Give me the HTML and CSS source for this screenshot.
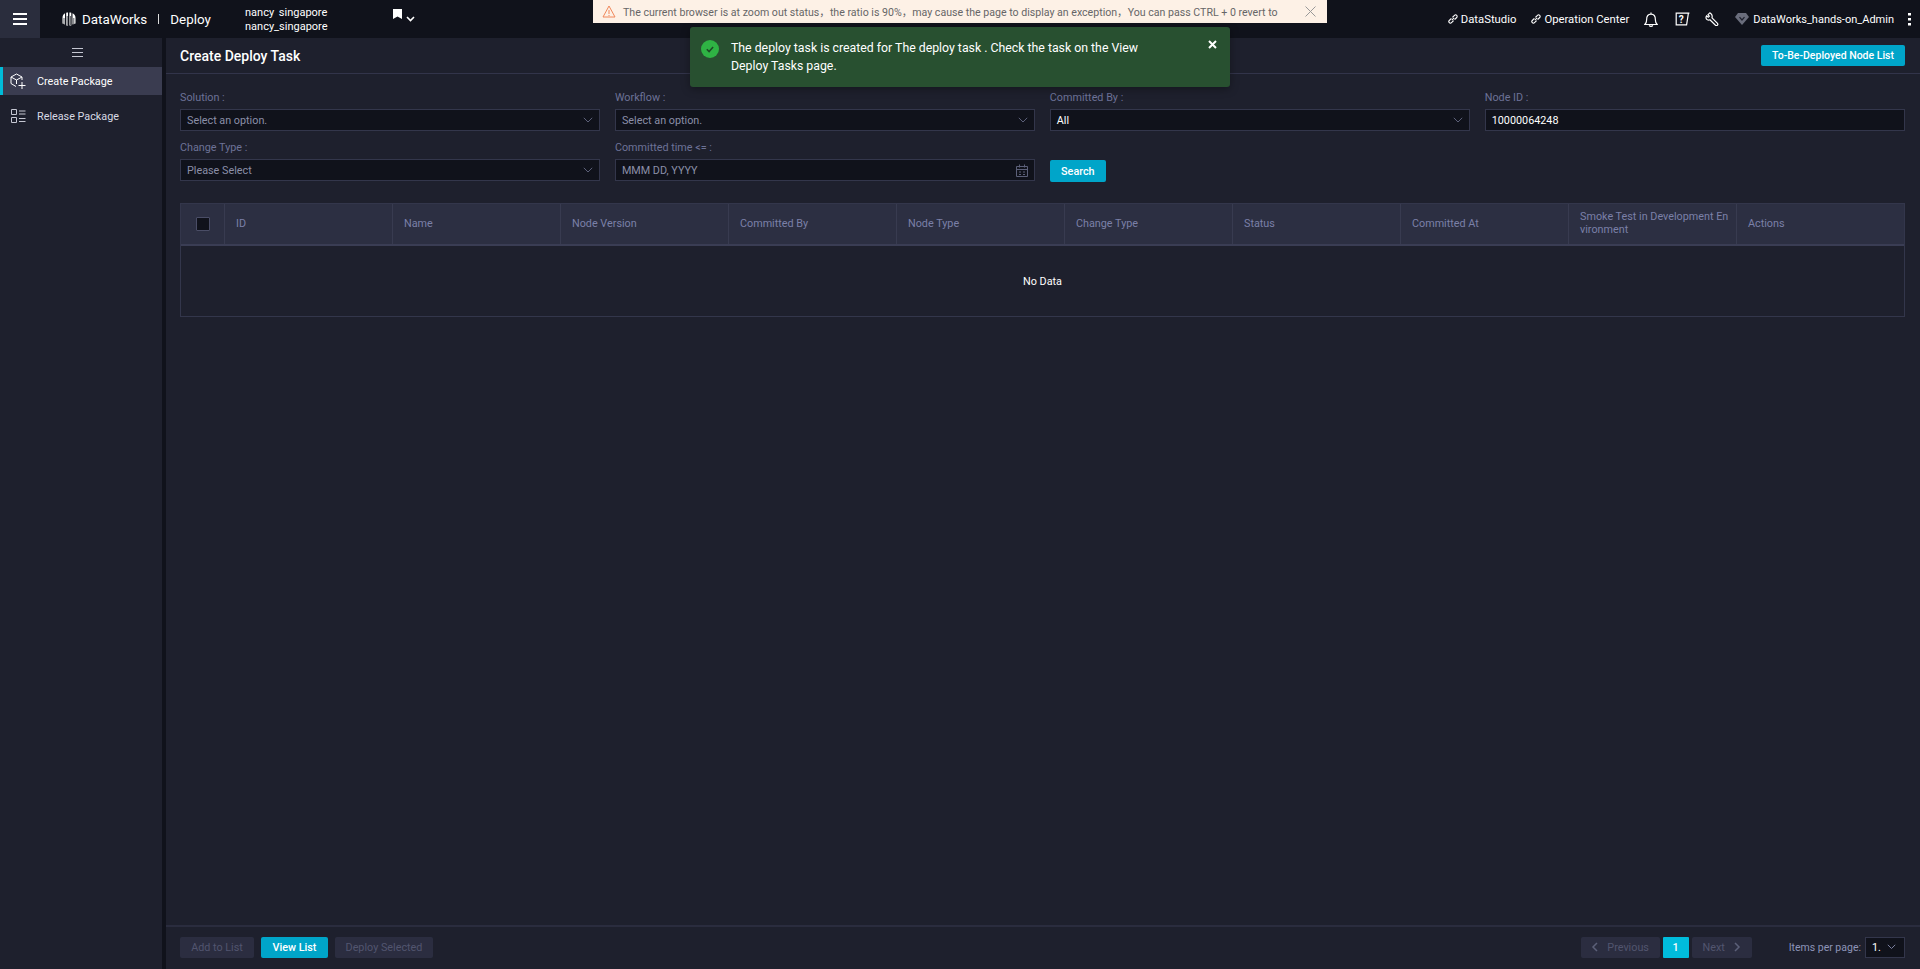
FILE: index.html
```html
<!DOCTYPE html>
<html>
<head>
<meta charset="UTF-8">
<title>Create Deploy Task</title>
<link rel="stylesheet" href="styles.css">
</head>
<body>

<div class="topbar">
  <div class="menu-btn">
    <svg width="14" height="12" viewBox="0 0 14 12"><path d="M0 1h14M0 6h14M0 11h14" stroke="#fff" stroke-width="2" fill="none"/></svg>
  </div>
  <div class="brand">
    <svg class="logo" width="14" height="14" viewBox="0 0 14 14"><path d="M.5 11.500V6C.5 3.500 1.500 2 3 1.200V12.500zM4.200 13.500V.8C4.800.6 5.400.5 6 .5V13.500zM7.400 13.500V.5C8 .5 8.700.6 9.300.8V13.500zM10.500 12.500V1.200C12.300 2 13.500 3.500 13.500 6V11.500z" fill="#fff"/><path d="M2 12V6M5.200 13V4M8.400 13V4M11.800 12V6" stroke="#10121b" stroke-width=".7"/></svg>
    <span class="brand-name">DataWorks</span>
    <span class="brand-sep"></span>
    <span class="brand-name">Deploy</span>
  </div>
  <div class="workspace">
    <div class="ws-first">nancy singapore</div>
    <div>nancy_singapore</div>
  </div>
  <div class="bookmark">
    <svg width="9" height="10" viewBox="0 0 9 10"><path d="M0 0h9v10L4.500 7.500 0 10z" fill="#fff"/></svg>
    <svg class="bookmark-arrow" width="9" height="6" viewBox="0 0 9 6"><path d="M1 1l3.500 3.500L8 1" stroke="#fff" stroke-width="1.600" fill="none"/></svg>
  </div>
  <div class="top-right">
    <a class="top-link">
      <svg width="10" height="10" viewBox="0 0 10 10"><path d="M3.800 6.200L6.200 3.800M3.400 4.400L1.300 6.500a1.500 1.500 0 0 0 2.200 2.200l2.100-2.100M4.400 3.400l2.100-2.100a1.500 1.500 0 0 1 2.200 2.200L6.600 5.600" stroke="#fff" stroke-width="1.100" fill="none"/></svg>
      DataStudio
    </a>
    <a class="top-link">
      <svg width="10" height="10" viewBox="0 0 10 10"><path d="M3.800 6.200L6.200 3.800M3.400 4.400L1.300 6.500a1.500 1.500 0 0 0 2.200 2.200l2.100-2.100M4.400 3.400l2.100-2.100a1.500 1.500 0 0 1 2.200 2.200L6.600 5.600" stroke="#fff" stroke-width="1.100" fill="none"/></svg>
      Operation Center
    </a>
    <svg class="ic-bell" width="14" height="15" viewBox="0 0 14 15"><path d="M.8 12.500c1.200-1 1.800-2 1.800-4.600C2.600 4 4.400 2.200 7 2.200s4.400 1.800 4.400 5.700c0 2.600.6 3.600 1.800 4.600zM7 2.200V.6M5.200 13.400c.4.700 1 1 1.800 1s1.400-.3 1.800-1" stroke="#fff" stroke-width="1.200" fill="none"/></svg>
    <svg class="ic-help" width="15" height="14" viewBox="0 0 15 14"><path d="M.6 1.200h13.800M1.200 1.200v11.600h10.400l1.800-11.600" stroke="#fff" stroke-width="1.200" fill="none"/><text x="3.800" y="10.800" class="ic-help-q">?</text></svg>
    <svg class="ic-wrench" width="14" height="14" viewBox="0 0 14 14"><path d="M4.800.9L3 2.700l1.300 1.500-1.100 1.100L1.600 3.900C.6 5.300.9 7 2.400 7.800c.8.400 1.800.3 2.500 0l5.600 5.400c.6.500 1.300.4 1.900 0 .6-.6.500-1.300.1-1.800L7 5.800c.4-1.300.2-2.500-.6-3.600C6 1.600 5.500 1.200 4.800.9z" stroke="#fff" stroke-width="1.200" fill="none"/></svg>
    <div class="user">
      <svg width="14" height="12" viewBox="0 0 14 12"><path d="M3 0h8l3 4-7 8-7-8z" fill="#6a6d7c"/><path d="M4.500 4.200L7 7l2.500-2.800" stroke="#1e202d" stroke-width="1.200" fill="none"/></svg>
      DataWorks_hands-on_Admin
    </div>
    <svg class="ic-dots" width="3" height="13" viewBox="0 0 3 13"><path d="M0 0h3v2.500H0zM0 5h3v2.500H0zM0 10h3v2.500H0z" fill="#fff"/></svg>
  </div>
</div>

<div class="zoom-tip">
  <svg width="14" height="13" viewBox="0 0 14 13"><path d="M7 1L1 12h12zM7 5v4M7 10v1" stroke="#f0875a" fill="none"/></svg>
  <span class="zoom-text">The current browser is at zoom out status，the ratio is 90%，may cause the page to display an exception，You can pass CTRL + 0 revert to</span>
  <svg class="zoom-close" width="11" height="11" viewBox="0 0 11 11"><path d="M.5.500l10 10M10.500.500l-10 10" stroke="#999" fill="none"/></svg>
</div>

<div class="toast">
  <svg class="toast-icon" width="18" height="18" viewBox="0 0 18 18"><circle cx="9" cy="9" r="9" fill="#2fb344"/><path d="M5.800 9.200l2.300 2.400 4-4.600" stroke="#1d4a26" stroke-width="1.500" fill="none"/></svg>
  <div class="toast-text">The deploy task is created for The deploy task . Check the task on the View Deploy Tasks page.</div>
  <svg class="toast-close" width="9" height="9" viewBox="0 0 9 9"><path d="M1 1l7 7M8 1L1 8" stroke="#fff" stroke-width="2" fill="none"/></svg>
</div>

<div class="layout">
  <div class="sidebar">
    <div class="side-toggle">
      <svg width="11" height="9" viewBox="0 0 11 9"><path d="M0 .5h11M0 4.500h11M0 8.500h11" stroke="#c5c7d2" fill="none"/></svg>
    </div>
    <a class="side-item active">
      <svg width="16" height="16" viewBox="0 0 16 16"><path d="M1 4l5.500-3L12 4v3M1 4v6.500L6 13.500M1 4l5.500 3L12 4M6.500 7v4" stroke="#fff" fill="none"/><path d="M8.500 12.500h7M12 9v7" stroke="#fff" fill="none"/></svg>
      Create Package
    </a>
    <a class="side-item">
      <svg width="16" height="16" viewBox="0 0 16 16"><path d="M1.500 1.500h5v5h-5zM1.500 9.500h5v5h-5zM9 3h6.500M9 6h6.500M9 10.500h6.500M9 13.500h6.500" stroke="#c5c7d2" fill="none"/></svg>
      Release Package
    </a>
  </div>

  <div class="main">
    <div class="page-head">
      <h3 class="page-title">Create Deploy Task</h3>
      <a class="btn btn-primary btn-list">To-Be-Deployed Node List</a>
    </div>

    <div class="filters">
      <div class="field">
        <label>Solution :</label>
        <div class="input"><span class="ph">Select an option.</span><svg class="caret" width="10" height="6" viewBox="0 0 10 6"><path d="M.8.800L5 5 9.200.800" stroke="#5c6079" fill="none"/></svg></div>
      </div>
      <div class="field">
        <label>Workflow :</label>
        <div class="input"><span class="ph">Select an option.</span><svg class="caret" width="10" height="6" viewBox="0 0 10 6"><path d="M.8.800L5 5 9.200.800" stroke="#5c6079" fill="none"/></svg></div>
      </div>
      <div class="field">
        <label>Committed By :</label>
        <div class="input"><span class="val">All</span><svg class="caret" width="10" height="6" viewBox="0 0 10 6"><path d="M.8.800L5 5 9.200.800" stroke="#5c6079" fill="none"/></svg></div>
      </div>
      <div class="field">
        <label>Node ID :</label>
        <div class="input"><span class="val">10000064248</span></div>
      </div>
      <div class="field">
        <label>Change Type :</label>
        <div class="input"><span class="ph">Please Select</span><svg class="caret" width="10" height="6" viewBox="0 0 10 6"><path d="M.8.800L5 5 9.200.800" stroke="#5c6079" fill="none"/></svg></div>
      </div>
      <div class="field">
        <label>Committed time &lt;= :</label>
        <div class="input"><span class="ph">MMM DD, YYYY</span>
          <svg class="caret" width="12" height="13" viewBox="0 0 12 13"><path d="M.5 2.500h11v10H.5zM.5 5.500h11M3.500.5v3M8.500.5v3M3 8h2M7 8h2M3 10.500h2M7 10.500h2" stroke="#5c6079" fill="none"/></svg>
        </div>
      </div>
      <div class="field field-btn">
        <a class="btn btn-primary btn-search">Search</a>
      </div>
    </div>

    <div class="table">
      <div class="table-head">
        <div class="th th-check"><span class="checkbox"></span></div>
        <div class="th">ID</div>
        <div class="th">Name</div>
        <div class="th">Node Version</div>
        <div class="th">Committed By</div>
        <div class="th">Node Type</div>
        <div class="th">Change Type</div>
        <div class="th">Status</div>
        <div class="th">Committed At</div>
        <div class="th th-wrap">Smoke Test in Development Environment</div>
        <div class="th">Actions</div>
      </div>
      <div class="table-empty">No Data</div>
    </div>

    <div class="footer">
      <div class="foot-actions">
        <a class="btn btn-off btn-add">Add to List</a>
        <a class="btn btn-primary btn-view">View List</a>
        <a class="btn btn-off btn-deploy">Deploy Selected</a>
      </div>
      <div class="pager">
        <a class="btn btn-off page-prev">
          <svg width="7" height="10" viewBox="0 0 7 10"><path d="M6 1L2 5l4 4" stroke="#5c6079" stroke-width="1.500" fill="none"/></svg>
          Previous
        </a>
        <a class="page-num">1</a>
        <a class="btn btn-off page-next">
          Next
          <svg width="7" height="10" viewBox="0 0 7 10"><path d="M1 1l4 4-4 4" stroke="#5c6079" stroke-width="1.500" fill="none"/></svg>
        </a>
        <span class="per-label">Items per page:</span>
        <div class="per-select"><span>1.</span><svg width="9" height="6" viewBox="0 0 9 6"><path d="M.8.800L4.500 4.500 8.200.800" stroke="#7b80a0" fill="none"/></svg></div>
      </div>
    </div>
  </div>
</div>

</body>
</html>
```

FILE: styles.css
```css
*{ margin: 0; padding: 0; box-sizing: border-box; }
html,body{ height: 100%; overflow: hidden; }
body{ background: #10121b; color: #fff; font-family: Roboto, "Liberation Sans", "Noto Sans CJK SC", sans-serif; font-size: 10.8px; display: flex; flex-direction: column; }
a{ text-decoration: none; }

.topbar{ height: 38px; flex: none; display: flex; align-items: center; background: #10121b; }
.menu-btn{ width: 40px; height: 38px; background: #2a2d3d; display: flex; align-items: center; justify-content: center; }
.brand{ display: flex; align-items: center; margin-left: 22px; width: 183px; }
.brand .logo{ margin-right: 6px; }
.brand-name{ font-size: 13.4px; color: #fff; }
.brand-sep{ width: 1px; height: 10px; background: #ddd; margin: 0 11px 0 11px; }
.workspace{ width: 148px; line-height: 14px; color: #fff; padding-top: 1px; font-size: 11px; }
.ws-first{ word-spacing: 2px; }
.bookmark{ display: flex; align-items: flex-start; height: 20px; }
.bookmark-arrow{ margin: 7px 0 0 4px; }
.top-right{ margin-left: auto; display: flex; align-items: center; padding-right: 9px; font-size: 11.3px; }
.top-link{ color: #fff; display: flex; align-items: center; gap: 3px; margin-right: 15px; }
.top-right .ic-bell{ margin-right: 17px; }
.top-right .ic-help{ margin-right: 15px; }
.top-right .ic-wrench{ margin-right: 16px; }
.ic-help-q{ font-size: 10px; font-weight: 700; fill: #fff; }
.user{ display: flex; align-items: center; gap: 4px; margin-right: 14px; font-size: 11px; }

.zoom-tip{ position: absolute; left: 593px; top: 0; width: 734px; height: 23px; background: #fdf1e6; color: #666; display: flex; align-items: center; padding: 0 0 1px 9px; z-index: 5; }
.zoom-text{ margin-left: 7px; white-space: nowrap; font-size: 10.6px; }
.zoom-close{ position: absolute; right: 11px; top: 6px; }

.toast{ position: absolute; left: 690px; top: 27px; width: 540px; height: 60px; background: #285030; border-radius: 3px; box-shadow: 0 2px 8px rgba(0,0,0,.35); z-index: 6; padding: 12px 0 0 41px; }
.toast-icon{ position: absolute; left: 11px; top: 13px; }
.toast-text{ width: 440px; font-size: 12.3px; line-height: 18px; color: #fff; }
.toast-close{ position: absolute; right: 13px; top: 13px; }

.layout{ flex: 1; display: flex; min-height: 0; }
.sidebar{ width: 166px; flex: none; background: #1e202d; border-right: 4px solid #10121b; }
.side-toggle{ height: 29px; display: flex; align-items: center; justify-content: center; padding-right: 7px; }
.side-item{ height: 28px; display: flex; align-items: center; color: #d8dae4; padding-left: 10px; gap: 11px; margin-bottom: 7px; }
.side-item.active{ background: #3a3c50; color: #fff; border-left: 3px solid #00bcd9; padding-left: 7px; }

.main{ flex: 1; min-width: 0; display: flex; flex-direction: column; background: #1e202d; }
.page-head{ height: 36px; flex: none; display: flex; align-items: center; justify-content: space-between; padding: 0 15px 0 14px; border-bottom: 1px solid #32344a; }
.page-title{ font-size: 14px; font-weight: 500; color: #fff; }
.btn{ display: inline-flex; align-items: center; justify-content: center; height: 21px; padding: 0 12px; border-radius: 2px; font-size: 10.8px; }
.btn-primary{ background: #00a5c9; color: #fff; font-weight: 500; }
.btn-off{ background: #2b2d40; color: #52556f; }
.btn-list{ width: 144px; padding: 0; font-size: 10.5px; }
.btn-add{ width: 74px; padding: 0; }
.btn-view{ width: 67px; padding: 0; }
.btn-deploy{ width: 98px; padding: 0; }

.filters{ display: grid; grid-template-columns: repeat(4, 1fr); column-gap: 14.67px; row-gap: 9px; padding: 16px 15px 0 14px; }
.field label{ display: block; height: 19px; line-height: 15px; color: #6d7297; }
.input{ height: 22px; display: flex; align-items: center; justify-content: space-between; background: #10121b; border: 1px solid #33364b; padding: 0 6px; }
.ph{ color: #8b8fa8; }
.val{ color: #fff; }
.field-btn{ display: flex; align-items: flex-end; }
.btn-search{ width: 56px; padding: 0; height: 22px; margin-bottom: -1px; }

.table{ margin: 22px 15px 0 14px; border: 1px solid #33364b; flex: none; }
.table-head{ display: grid; grid-template-columns: 43px repeat(10, 168px); background: #2c2f42; border-bottom: 2px solid #3a3d54; height: 42px; }
.th{ display: flex; align-items: center; padding: 0 7px 2px 11px; color: #7b80a8; border-left: 1px solid #383b50; line-height: 13px; }
.th-check{ border-left: 0; justify-content: center; padding: 0; }
.th-wrap{ word-break: break-all; }
.checkbox{ width: 14px; height: 14px; background: #10121b; border: 1px solid #4a4d66; border-radius: 1px; }
.table-empty{ height: 70px; display: flex; align-items: center; justify-content: center; color: #fff; }

.footer{ margin-top: auto; height: 44px; flex: none; display: flex; align-items: center; justify-content: space-between; padding: 0 15px 2px 14px; border-top: 2px solid #2a2c3e; }
.foot-actions{ display: flex; gap: 7px; }
.pager{ display: flex; align-items: center; }
.page-prev,.page-next{ gap: 9px; padding: 0; }
.page-prev{ width: 79px; }
.page-next{ width: 60px; }
.page-num{ width: 26px; height: 21px; margin: 0 3px; background: #00bcdc; color: #fff; font-weight: 500; display: flex; align-items: center; justify-content: center; border-radius: 1px; }
.per-label{ margin: 0 4px 0 37px; color: #8d94b8; font-size: 10.5px; }
.per-select{ width: 40px; height: 21px; background: #10121b; border: 1px solid #33364b; display: flex; align-items: center; justify-content: space-between; padding: 0 8px 0 6px; color: #fff; }
```
